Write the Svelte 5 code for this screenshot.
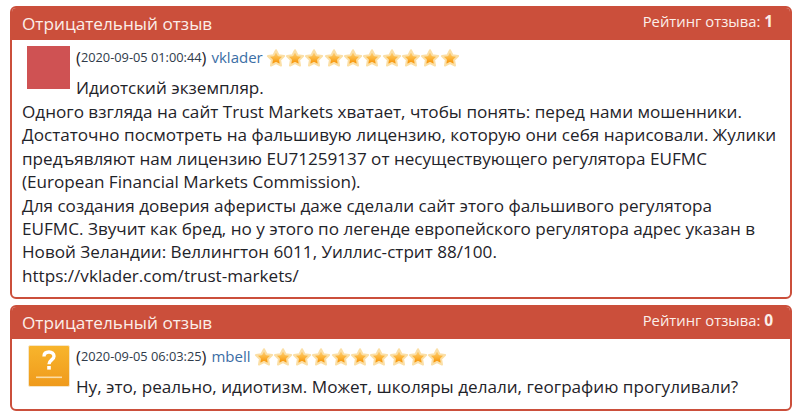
<script>
  const reviews = [
    {
      date: '2020-09-05 01:00:44',
      user: 'vklader',
      rating: 1,
      avatar: 'red',
      lines: [
        'Идиотский экземпляр.',
        'Одного взгляда на сайт Trust Markets хватает, чтобы понять: перед нами мошенники.',
        'Достаточно посмотреть на фальшивую лицензию, которую они себя нарисовали. Жулики',
        'предъявляют нам лицензию EU71259137 от несуществующего регулятора EUFMC',
        '(European Financial Markets Commission).',
        'Для создания доверия аферисты даже сделали сайт этого фальшивого регулятора',
        'EUFMC. Звучит как бред, но у этого по легенде европейского регулятора адрес указан в',
        'Новой Зеландии: Веллингтон 6011, Уиллис-стрит 88/100.',
        'https://vklader.com/trust-markets/'
      ]
    },
    {
      date: '2020-09-05 06:03:25',
      user: 'mbell',
      rating: 0,
      avatar: 'none',
      lines: ['Ну, это, реально, идиотизм. Может, школяры делали, географию прогуливали?']
    }
  ];
  const stars = Array.from({ length: 10 });
</script>

<svg class="defs" width="0" height="0" aria-hidden="true">
  <defs>
    <linearGradient id="star-fill" x1="0" y1="0" x2="0" y2="1">
      <stop offset="0" stop-color="#fdd78a" />
      <stop offset="0.5" stop-color="#fcb63e" />
      <stop offset="0.78" stop-color="#f79a12" />
      <stop offset="1" stop-color="#fab036" />
    </linearGradient>
    <linearGradient id="avatar-fill" x1="0" y1="0" x2="0" y2="1">
      <stop offset="0" stop-color="#f8b52c" />
      <stop offset="1" stop-color="#ef9a1c" />
    </linearGradient>
  </defs>
</svg>

<div class="page">
  {#each reviews as r}
    <section class="card">
      <header>
        <span class="title">Отрицательный отзыв</span>
        <span class="rating">Рейтинг отзыва: <b>{r.rating}</b></span>
      </header>
      <div class="body">
        {#if r.avatar === 'red'}
          <div class="avatar red"></div>
        {:else}
          <svg class="avatar none" viewBox="0 0 42 42">
            <rect x="0.5" y="0.5" width="41" height="41" rx="1.5" fill="url(#avatar-fill)" stroke="#f6e6c8" />
            <path d="M16 11.500c0-3 2.200-4.500 5-4.500s5 1.600 5 4.200c0 3.600-5 3.800-5 8" fill="none" stroke="#fff" stroke-width="3.400" />
            <rect x="19.200" y="21" width="3.600" height="3.600" fill="#fff" />
            <rect x="8" y="31.500" width="26" height="1.600" fill="#fbdca4" />
          </svg>
        {/if}
        <div class="meta">
          <span class="paren">(</span><span class="date">{r.date}</span><span class="paren">)</span>
          <span class="user">{r.user}</span>
          <span class="stars">
            {#each stars as _}
              <svg viewBox="1 1 18 18" width="20" height="20">
                <path d="M10 3l2.300 4.500 5 .8-3.600 3.500.8 5L10 14.500l-4.500 2.300.8-5-3.600-3.500 5-.8z" fill="url(#star-fill)" stroke="#fbdfa6" stroke-width="1.800" stroke-linejoin="round" />
              </svg>
            {/each}
          </span>
        </div>
        {#each r.lines as line, i}
          <div class="line" class:first={i === 0}>{line}</div>
        {/each}
      </div>
    </section>
  {/each}
</div>

<style>
  :global(body) {
    margin: 0;
    background: #fff;
  }

  .defs {
    position: absolute;
  }

  .page {
    display: flex;
    flex-direction: column;
    gap: 6px;
    padding: 6px 8px 0 10px;
    font-family: "Open Sans", sans-serif;
    color: #1f2329;
  }

  .card {
    border: 2px solid #cb4f3b;
    border-radius: 6px;
    background: #fff;
    overflow: hidden;
  }

  header {
    display: flex;
    justify-content: space-between;
    background: #cb4f3b;
    color: #fbeee9;
    height: 32px;
    padding: 0 17px 0 10px;
  }

  .title {
    font-size: 17.200px;
    line-height: 32px;
  }

  .rating {
    font-size: 14.800px;
    line-height: 27px;
  }

  .rating b {
    font-size: 15.500px;
  }

  .body {
    padding: 6px 10px 10px;
    font-size: 17.130px;
    line-height: 23.400px;
  }

  .avatar {
    float: left;
    width: 43px;
    height: 43px;
    margin: 0 6px 0 5px;
  }

  .avatar.red {
    background: #cf5253;
  }

  .avatar.none {
    width: 42px;
    height: 42px;
    margin: 0 6px 0 6px;
  }

  .meta {
    display: flex;
    align-items: center;
    height: 24px;
    white-space: nowrap;
  }

  .paren {
    font-size: 16.500px;
  }

  .date {
    font-size: 12.800px;
    color: #2f3b4a;
  }

  .user {
    margin-left: 5px;
    color: #3b6ea5;
    font-size: 15px;
  }

  .stars {
    display: flex;
    margin-left: 3px;
  }

  .stars svg {
    margin-right: -0.700px;
  }

  .line {
    white-space: nowrap;
  }

  .line.first {
    margin: 6px 0 0.500px;
  }
</style>
